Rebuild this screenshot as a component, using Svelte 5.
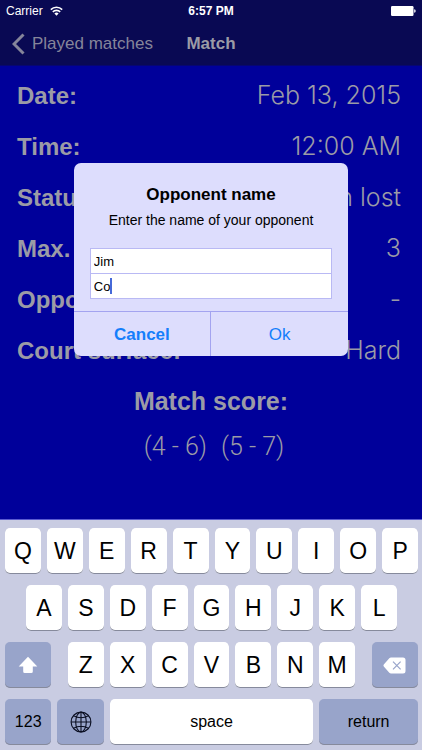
<script>
    const details = [
        { label: 'Date:', value: 'Feb 13, 2015' },
        { label: 'Time:', value: '12:00 AM' },
        { label: 'Status:', value: 'Been lost' },
        { label: 'Max. sets:', value: '3' },
        { label: 'Opponent:', value: '-' },
        { label: 'Court surface:', value: 'Hard' },
    ]

    const sets = [[4, 6], [5, 7]]

    const topRow = [...'QWERTYUIOP']
    const homeRow = [...'ASDFGHJKL']
    const bottomRow = [...'ZXCVBNM']

    let firstName = $state('Jim')
    let lastName = $state('Co')
    let open = $state(true)

    function type(char) {
        lastName += char
    }

    function erase() {
        lastName = lastName.slice(0, -1)
    }

    function close() {
        open = false
    }
</script>

<div class="app">
    <div class="screen">
        <header>
            <div class="status">
                <span class="carrier">
                    Carrier
                    <svg width="13" height="10" viewBox="0 0 13 10" aria-hidden="true">
                        <path d="M.8 3.6a8.200 8.200 0 0 1 11.400 0M2.800 5.900a5.300 5.300 0 0 1 7.400 0" fill="none" stroke="#fff" stroke-width="1.6" />
                        <path d="M4.400 7.500a3 3 0 0 1 4.200 0L6.500 9.800z" fill="#fff" />
                    </svg>
                </span>
                <span class="clock">6:57 PM</span>
                <svg class="battery" width="25" height="10" viewBox="0 0 25 10" aria-hidden="true">
                    <rect width="22.5" height="10" rx="1.2" fill="#fff" />
                    <path d="M23.2 3.2q1.5.3 1.5 1.8t-1.5 1.8z" fill="#fff" />
                </svg>
            </div>
            <nav>
                <a class="back" href="#played">
                    <svg width="13" height="22" viewBox="0 0 13 22" aria-hidden="true">
                        <path d="M11.5 1.5 2 11l9.5 9.5" fill="none" stroke="currentColor" stroke-width="3" />
                    </svg>
                    Played matches
                </a>
                <h1>Match</h1>
            </nav>
        </header>

        <main>
            <dl>
                {#each details as { label, value }}
                    <div class="row">
                        <dt>{label}</dt>
                        <dd>{value}</dd>
                    </div>
                {/each}
            </dl>
            <h2>Match score:</h2>
            <p class="score">
                {#each sets as [us, them]}
                    <span>({us} - {them})</span>
                {/each}
            </p>
        </main>

        {#if open}
            <div class="overlay">
                <div class="dialog" role="dialog" aria-labelledby="dialog-title">
                    <div class="content">
                        <h3 id="dialog-title">Opponent name</h3>
                        <p>Enter the name of your opponent</p>
                        <div class="fields">
                            <label class="field">
                                <input aria-label="First name" bind:value={firstName} />
                            </label>
                            <label class="field">
                                <input aria-label="Last name" bind:value={lastName} />
                                <span class="caret"></span>
                            </label>
                        </div>
                    </div>
                    <div class="actions">
                        <button class="cancel" onclick={close}>Cancel</button>
                        <button onclick={close}>Ok</button>
                    </div>
                </div>
            </div>
        {/if}
    </div>

    <div class="keyboard">
        {#each topRow as char}
            <button class="key" onclick={() => type(char)}>{char}</button>
        {/each}

        {#each homeRow as char, i}
            <button class="key" class:home-start={i === 0} onclick={() => type(char)}>{char}</button>
        {/each}

        <button class="key special shift" aria-label="Shift">
            <svg width="20" height="18" viewBox="0 0 20 18" aria-hidden="true">
                <path d="M10 .8 19.3 10.5H14.8V15.5Q14.8 17 13.3 17H6.7Q5.2 17 5.2 15.5V10.5H.7z" fill="#fff" />
            </svg>
        </button>
        {#each bottomRow as char, i}
            <button class="key" class:bottom-start={i === 0} onclick={() => type(char)}>{char}</button>
        {/each}
        <button class="key special delete" aria-label="Delete" onclick={erase}>
            <svg width="23" height="17" viewBox="0 0 23 17" aria-hidden="true">
                <path d="M8 .5H20Q22.5 .5 22.5 3V14Q22.5 16.5 20 16.5H8Q7 16.5 6.3 15.7L.8 9.5Q0 8.5 .8 7.5L6.3 1.3Q7 .5 8 .5z" fill="#fff" />
                <path d="m10 4.7 7.6 7.6m0-7.6L10 12.3" stroke="#98a4ca" stroke-width="1.2" />
            </svg>
        </button>

        <button class="key special numbers">123</button>
        <button class="key special globe" aria-label="Next keyboard">
            <svg width="22" height="22" viewBox="0 0 22 22" fill="none" stroke="#0b0f22" stroke-width="1.1" aria-hidden="true">
                <circle cx="11" cy="11" r="9.9" />
                <ellipse cx="11" cy="11" rx="5.3" ry="9.9" />
                <path d="M11 1v20M1 11h20M3.5 4.8q7.5 4 15 0M3.5 17.2q7.5-4 15 0" />
            </svg>
        </button>
        <button class="key space" onclick={() => type(' ')}>space</button>
        <button class="key special return">return</button>
    </div>
</div>

<style>
    :global(body) {
        margin: 0;
        background: #00009a;
    }

    .app {
        display: flex;
        flex-direction: column;
        min-height: 100vh;
        font-family: "Liberation Sans", Arial, sans-serif;
        color: #9b9ba6;
    }

    h1, h2, h3, p, dl, dd {
        margin: 0;
    }

    button {
        border: 0;
        padding: 0;
        font: inherit;
        color: inherit;
    }

    .screen {
        position: relative;
        flex: 1;
        background: #00009a;
    }

    header {
        height: 65px;
        background: #090953;
        border-bottom: 1px solid #060670;
    }

    .status {
        display: grid;
        grid-template-columns: 1fr auto 1fr;
        align-items: center;
        height: 22px;
        padding: 0 6px;
        font-size: 12px;
        color: #fff;
    }

    .carrier {
        display: flex;
        align-items: center;
        gap: 7px;
    }

    .clock {
        font-weight: bold;
    }

    .battery {
        justify-self: end;
    }

    nav {
        display: grid;
        grid-template-columns: 1fr auto 1fr;
        align-items: center;
        height: 43px;
        padding: 0 12px;
        font-size: 17px;
    }

    .back {
        display: flex;
        align-items: center;
        gap: 7px;
        color: #85859a;
        text-decoration: none;
        white-space: nowrap;
    }

    h1 {
        font-size: 17px;
    }

    main {
        padding: 4px 0 16px;
    }

    dl {
        padding: 0 21px 0 17px;
    }

    .row {
        display: flex;
        justify-content: space-between;
        line-height: 51px;
    }

    dt {
        font-size: 24px;
        font-weight: bold;
    }

    dd {
        font-family: Inter, "Liberation Sans", sans-serif;
        font-size: 25px;
        font-weight: 300;
    }

    h2 {
        font-size: 25px;
        line-height: 51px;
        text-align: center;
    }

    .score {
        display: flex;
        justify-content: center;
        gap: 14px;
        padding-left: 6px;
        font-family: Roboto, "Liberation Sans", sans-serif;
        font-size: 25px;
        font-weight: 300;
        line-height: 40px;
    }

    .overlay {
        position: absolute;
        inset: 0;
        display: grid;
        place-items: center;
    }

    .dialog {
        width: 65%;
        border-radius: 7px;
        overflow: hidden;
        background: #ddddfd;
        color: #000;
    }

    .content {
        padding: 20px 16px 12px;
        text-align: center;
    }

    h3 {
        font-size: 17px;
        line-height: 24px;
    }

    .content p {
        font-size: 14px;
        line-height: 26px;
    }

    .fields {
        margin-top: 15px;
        border: 1px solid #b9b9f4;
        background: #fff;
    }

    .field {
        display: flex;
        align-items: center;
        height: 24px;
        padding: 0 3px;
    }

    .field + .field {
        border-top: 1px solid #b9b9f4;
    }

    input {
        field-sizing: content;
        border: 0;
        padding: 0;
        outline: none;
        background: none;
        font: 13px "Liberation Sans", Arial, sans-serif;
        color: #000;
    }

    .caret {
        width: 2px;
        height: 16px;
        background: #4669d8;
    }

    .actions {
        display: grid;
        grid-template-columns: 1fr 1fr;
        border-top: 1px solid #a3a3f0;
    }

    .actions button {
        height: 44px;
        padding-top: 2px;
        background: none;
        font-size: 17px;
        color: #147efb;
    }

    .actions .cancel {
        border-right: 1px solid #a3a3f0;
        font-weight: bold;
    }

    /* 40 narrow tracks: a letter takes 4, a modifier 5 */
    .keyboard {
        display: grid;
        grid-template-columns: repeat(40, 1fr);
        gap: 11px 0;
        padding: 8px 1px 5px 2px;
        border-top: 1px solid #5a5ad0;
        background: #c9cce2;
    }

    .key {
        grid-column-end: span 4;
        height: 46px;
        margin: 0 3px;
        border-radius: 5px;
        background: #fff;
        box-shadow: inset 0 -1px #868a9c;
        font-size: 23px;
        color: #000;
    }

    .key svg {
        display: block;
        margin: auto;
    }

    .special {
        background: #98a4ca;
    }

    .home-start {
        grid-column-start: 3;
    }

    .shift, .delete, .numbers, .globe {
        grid-column-end: span 5;
    }

    .shift, .numbers {
        grid-column-start: 1;
    }

    .bottom-start {
        grid-column-start: 7;
    }

    .delete {
        grid-column-start: 36;
    }

    .space {
        grid-column-end: span 20;
    }

    .return {
        grid-column-end: span 10;
    }

    .numbers, .space, .return {
        font-size: 16px;
    }
</style>
